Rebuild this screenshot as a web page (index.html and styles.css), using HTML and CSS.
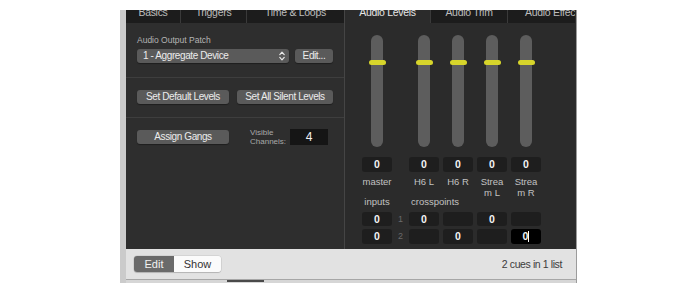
FILE: index.html
```html
<!DOCTYPE html>
<html>
<head>
<meta charset="utf-8">
<link rel="stylesheet" href="styles.css">
</head>
<body>
<div class="window">
  <div class="main">
    <div class="pane left">
      <div class="tabs">
        <div class="tab t-basics"><span>Basics</span></div>
        <div class="tab t-triggers"><span>Triggers</span></div>
        <div class="tab t-time"><span>Time &amp; Loops</span></div>
      </div>
      <section class="sec sec1">
        <div class="small-label">Audio Output Patch</div>
        <div class="row">
          <div class="btn popup">
            <span>1 - Aggregate Device</span>
            <svg class="updown" width="6" height="10" viewBox="0 0 6 10"><path d="M0.8 3.6 L3 1.2 L5.2 3.6 M0.8 6.4 L3 8.8 L5.2 6.4" fill="none" stroke="#e8e8e8" stroke-width="1.2" stroke-linecap="round" stroke-linejoin="round"/></svg>
          </div>
          <div class="btn edit">Edit...</div>
        </div>
      </section>
      <section class="sec sec2">
        <div class="row gap8">
          <div class="btn w92">Set Default Levels</div>
          <div class="btn w96">Set All Silent Levels</div>
        </div>
      </section>
      <section class="sec sec3">
        <div class="row">
          <div class="btn w92 assign">Assign Gangs</div>
          <div class="vis-label">Visible<br>Channels:</div>
          <div class="vis-field">4</div>
        </div>
      </section>
    </div>
    <div class="vsep"></div>
    <div class="pane right">
      <div class="tabs">
        <div class="tab t-levels sel"><span>Audio Levels</span></div>
        <div class="tab t-trim"><span>Audio Trim</span></div>
        <div class="tab t-fx"><span>Audio Effects</span></div>
      </div>
      <div class="mixer">
        <div class="mrow faders">
          <div class="fcell"><div class="track"><div class="knob"></div></div></div>
          <div></div>
          <div class="fcell"><div class="track"><div class="knob"></div></div></div>
          <div class="fcell"><div class="track"><div class="knob"></div></div></div>
          <div class="fcell"><div class="track"><div class="knob"></div></div></div>
          <div class="fcell"><div class="track"><div class="knob"></div></div></div>
        </div>
        <div class="mrow values">
          <div class="vbox">0</div><div></div>
          <div class="vbox">0</div><div class="vbox">0</div><div class="vbox">0</div><div class="vbox">0</div>
        </div>
        <div class="mrow names">
          <div class="name">master</div><div></div>
          <div class="name">H6 L</div><div class="name">H6 R</div><div class="name">Strea<br>m L</div><div class="name">Strea<br>m R</div>
        </div>
        <div class="mrow heads">
          <div class="head">inputs</div><div></div>
          <div class="head xp">crosspoints</div>
        </div>
        <div class="mrow grid1">
          <div class="vbox">0</div><div class="rnum">1</div>
          <div class="vbox">0</div><div class="vbox"></div><div class="vbox">0</div><div class="vbox"></div>
        </div>
        <div class="mrow grid2">
          <div class="vbox">0</div><div class="rnum">2</div>
          <div class="vbox"></div><div class="vbox">0</div><div class="vbox"></div><div class="vbox editing">0<span class="caret"></span></div>
        </div>
      </div>
    </div>
  </div>
  <div class="footer">
    <div class="seg">
      <div class="seg-item on">Edit</div>
      <div class="seg-item">Show</div>
    </div>
    <div class="status">2 cues in 1 list</div>
  </div>
  <div class="bottom-edge"><span class="dash"></span></div>
</div>
</body>
</html>
```

FILE: styles.css
```css
html, body {
  margin: 0;
  padding: 0;
  background: #ffffff;
}
body {
  font-family: "Liberation Sans", Arial, sans-serif;
  -webkit-font-smoothing: antialiased;
}
.window {
  margin: 10px 0 0 120px;
  width: 450px;
  border-left: 6px solid #cbcbcb;
  border-right: 1px solid #9c9c9c;
  display: flex;
  flex-direction: column;
  overflow: hidden;
}
.main {
  display: flex;
  height: 239px;
  background: #2d2d2d;
}
.pane {
  display: flex;
  flex-direction: column;
  overflow: hidden;
}
.left { width: 218px; background: #2e2e2e; }
.vsep { width: 1px; background: #454545; }
.right { width: 230px; background: #2b2b2b; }

.tabs {
  display: flex;
  height: 13px;
  background: #1c1c1c;
  flex: none;
  overflow: hidden;
}
.tab {
  height: 13px;
  border-right: 1px solid #3a3a3a;
  color: #bdbdbd;
  font-size: 10.5px;
  letter-spacing: -0.3px;
  text-align: center;
  flex: none;
  box-sizing: border-box;
}
.tab span {
  display: block;
  line-height: 13px;
  margin-top: -4px;
  white-space: nowrap;
}
.tab.sel { background: #2b2b2b; color: #e6e6e6; }
.t-basics { width: 55px; }
.t-triggers { width: 66px; }
.t-time { width: 97px; border-right: none; }
.t-levels { width: 86px; }
.t-trim { width: 77px; }
.t-fx { width: 100px; text-align: left; padding-left: 17px; border-right: none; }

.sec {
  padding: 0 0 0 11px;
  border-bottom: 1px solid #3e3e3e;
  flex: none;
}
.sec1 { height: 55px; padding-top: 12px; box-sizing: border-box; }
.sec2 { height: 40px; padding-top: 12px; box-sizing: border-box; }
.sec3 { flex: 1; padding-top: 10px; border-bottom: none; }

.small-label {
  color: #b4b4b4;
  font-size: 8.5px;
  line-height: 10px;
  margin-bottom: 4px;
}
.row { display: flex; align-items: center; gap: 6px; }
.row.gap8 { gap: 8px; }
.btn {
  height: 14px;
  line-height: 14px;
  background: #5a5a5a;
  border-radius: 3px;
  color: #ececec;
  font-size: 10px;
  letter-spacing: -0.4px;
  text-align: center;
  box-shadow: 0 1px 1px rgba(0,0,0,0.35);
  white-space: nowrap;
  flex: none;
}
.popup {
  width: 152px;
  display: flex;
  align-items: center;
  justify-content: space-between;
  padding: 0 4px 0 6px;
  box-sizing: border-box;
}
.updown { display: block; }
.edit { width: 38px; }
.w92 { width: 92px; }
.w96 { width: 96px; }
.vis-label {
  color: #a9a9a9;
  font-size: 8px;
  line-height: 9px;
  margin-left: 15px;
  width: 34px;
}
.vis-field {
  width: 38px;
  height: 16px;
  line-height: 16px;
  background: #151515;
  color: #f2f2f2;
  font-size: 12px;
  text-align: center;
}

.mixer {
  padding: 12px 0 0 17px;
  display: flex;
  flex-direction: column;
}
.mrow {
  display: grid;
  grid-template-columns: 30px 9px repeat(4, 30px);
  column-gap: 4px;
}
.fcell { display: flex; justify-content: center; }
.track {
  width: 12px;
  height: 112px;
  border-radius: 6px;
  background: #5d5d5d;
  position: relative;
}
.knob {
  position: absolute;
  top: 25px;
  left: 50%;
  width: 17px;
  height: 5px;
  margin-left: -8.5px;
  border-radius: 3px;
  background: #d7d52b;
}
.values { margin-top: 10px; }
.vbox {
  height: 15px;
  line-height: 15px;
  background: #1e1e1e;
  border-radius: 3px;
  color: #f4f4f4;
  font-size: 10.5px;
  font-weight: bold;
  text-align: center;
}
.names { margin-top: 4px; height: 22px; }
.name {
  color: #c2c2c2;
  font-size: 9.5px;
  line-height: 11px;
  text-align: center;
  white-space: nowrap;
}
.heads { height: 8px; }
.head {
  color: #c2c2c2;
  font-size: 9.5px;
  line-height: 8px;
  text-align: center;
  white-space: nowrap;
}
.head.xp { grid-column: 3 / span 2; text-align: left; padding-left: 2px; }
.grid1 { margin-top: 6px; }
.grid1 .vbox { height: 14px; line-height: 14px; }
.grid2 { margin-top: 3px; }
.rnum {
  color: #6a6a6a;
  font-size: 9px;
  line-height: 14px;
  text-align: center;
}
.vbox.editing { background: #000; }
.caret {
  display: inline-block;
  width: 1px;
  height: 11px;
  background: #fff;
  vertical-align: -2px;
}

.footer {
  height: 30px;
  background: #e2e2e2;
  display: flex;
  align-items: center;
  justify-content: space-between;
  padding: 0 14px 0 8px;
}
.seg {
  display: flex;
  height: 16px;
  border-radius: 3px;
  overflow: hidden;
  box-shadow: 0 0 0 0.5px rgba(0,0,0,0.12), 0 1px 1px rgba(0,0,0,0.15);
}
.seg-item {
  width: 47px;
  line-height: 16px;
  background: #fbfbfb;
  color: #333;
  font-size: 11px;
  text-align: center;
}
.seg-item.on {
  width: 40px;
  background: #6a6a6a;
  color: #f2f2f2;
}
.status {
  color: #3c3c3c;
  font-size: 10.5px;
  letter-spacing: -0.4px;
}
.bottom-edge {
  height: 4px;
  background: #d6d6d6;
  border-top: 1px solid #a6a6a6;
  box-sizing: border-box;
  display: flex;
}
.dash {
  margin-left: 101px;
  width: 37px;
  height: 2px;
  background: #4a4a4a;
}
```
